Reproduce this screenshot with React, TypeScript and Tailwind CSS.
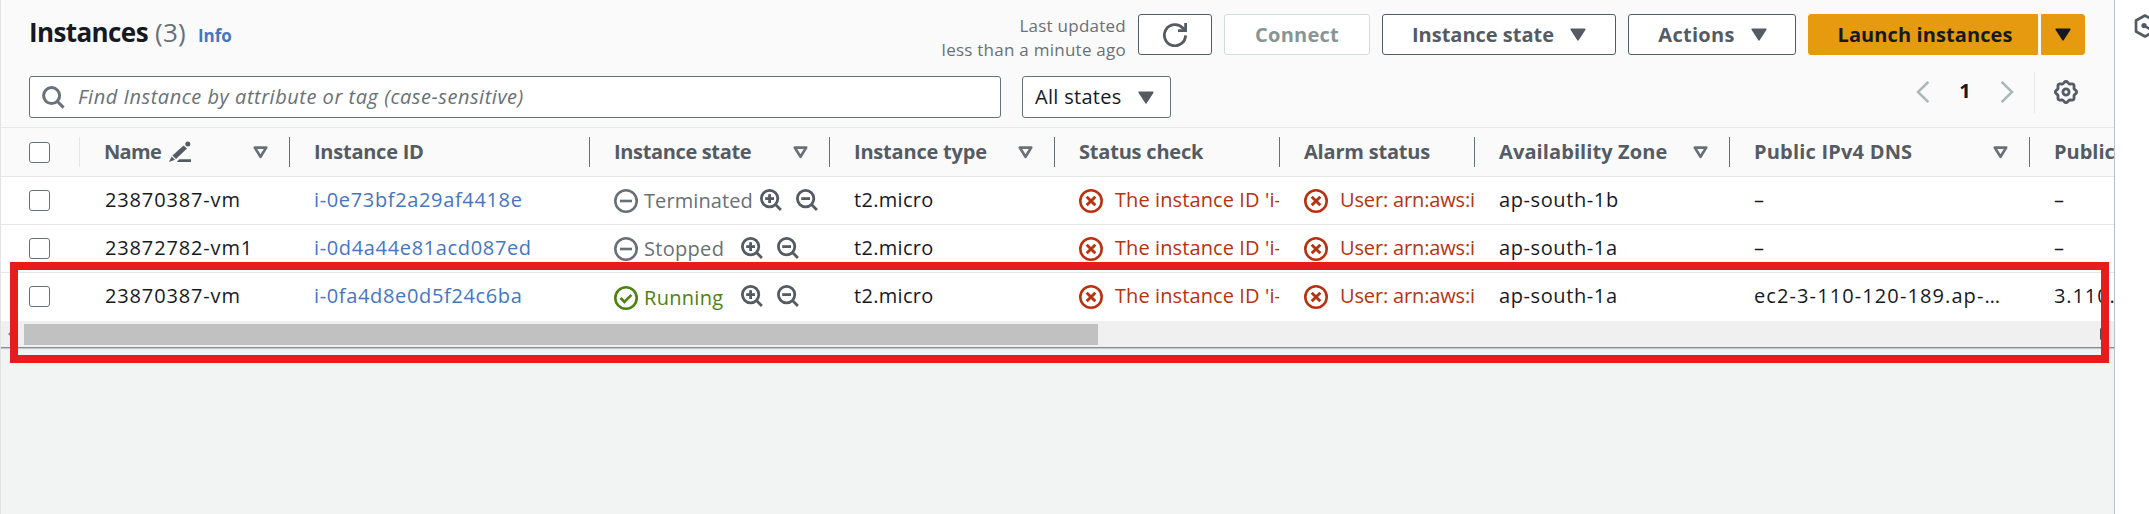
import type { ReactNode } from "react";

type State = "Terminated" | "Stopped" | "Running";

interface Instance {
  name: string;
  id: string;
  state: State;
  zone: string;
  dns: string;
  ip: string;
}

const instances: Instance[] = [
  { name: "23870387-vm", id: "i-0e73bf2a29af4418e", state: "Terminated", zone: "ap-south-1b", dns: "–", ip: "–" },
  { name: "23872782-vm1", id: "i-0d4a44e81acd087ed", state: "Stopped", zone: "ap-south-1a", dns: "–", ip: "–" },
  { name: "23870387-vm", id: "i-0fa4d8e0d5f24c6ba", state: "Running", zone: "ap-south-1a", dns: "ec2-3-110-120-189.ap-…", ip: "3.110." },
];

const columns =
  "grid grid-cols-[79px_210px_300px_240px_225px_225px_195px_255px_300px_84px]";

// Outline of the settings gear: a circle with eight rounded teeth.
const gearOutline =
  Array.from({ length: 96 }, (_, i) => {
    const angle = (i / 96) * Math.PI * 2;
    const radius = 9.7 + 0.95 * Math.cos(8 * angle);
    const x = 12 + radius * Math.sin(angle);
    const y = 12 - radius * Math.cos(angle);
    return `${i === 0 ? "M" : "L"}${x.toFixed(2)} ${y.toFixed(2)}`;
  }).join("") + "z";

function CaretDown() {
  return (
    <svg className="h-[13px] w-4 shrink-0" viewBox="0 0 16 13">
      <path d="M1.2 1.2h13.6L8 11.8z" fill="currentColor" stroke="currentColor" strokeWidth="1.6" strokeLinejoin="round" />
    </svg>
  );
}

function SortIcon() {
  return (
    <svg className="h-[13px] w-[15px] shrink-0 text-[#687078]" viewBox="0 0 15 13">
      <path d="M1.8 1.6h11.4L7.5 10.8z" fill="none" stroke="currentColor" strokeWidth="2.7" strokeLinejoin="round" />
    </svg>
  );
}

function EditIcon() {
  return (
    <svg className="h-[22px] w-[22px] shrink-0" viewBox="0 0 22 22" fill="currentColor">
      <circle cx="18.8" cy="2.9" r="2.5" />
      <path d="M14.6 4.4l3.4 3.2L7 18l-3.6-3.4zM2.6 15.6l3.4 3.2L0 21zM10.2 18.3H22V21H7.8z" />
    </svg>
  );
}

function SearchIcon() {
  return (
    <svg className="h-[23px] w-[23px] shrink-0 text-[#687078]" viewBox="0 0 23 23" fill="none" stroke="currentColor" strokeWidth="3">
      <circle cx="9.6" cy="9.6" r="8" />
      <path d="M15.2 15.2l6.4 6.4" />
    </svg>
  );
}

function ZoomIcon({ plus = false }: { plus?: boolean }) {
  return (
    <svg className="h-[22px] w-[22px] shrink-0 text-[#545b64]" viewBox="0 0 22 22" fill="none" stroke="currentColor" strokeWidth="2.8">
      <circle cx="9.6" cy="9.6" r="8.2" />
      <path d="M15.5 15.5l5.4 5.4" />
      <path d="M5.2 9.6h8.8" />
      {plus && <path d="M9.6 5.2V14" />}
    </svg>
  );
}

function RefreshIcon() {
  return (
    <svg className="h-6 w-6" viewBox="0 0 24 24" fill="none" stroke="currentColor" strokeWidth="2.8">
      <path d="M22.6 12.4A10.6 10.6 0 1 1 19.8 5l2 2.2" />
      <path d="M22.6 0v7.7H15" />
    </svg>
  );
}

function GearIcon() {
  return (
    <svg className="h-6 w-6" viewBox="0 0 24 24" fill="none" stroke="currentColor" strokeWidth="2.8" strokeLinejoin="round">
      <path d={gearOutline} />
      <circle cx="12" cy="12" r="3.1" />
    </svg>
  );
}

function HexIcon() {
  return (
    <svg className="h-6 w-[22px] shrink-0" viewBox="0 0 22 24" fill="none" stroke="#545b64" strokeWidth="2.7">
      <path d="M11 1.5l9 5v11l-9 5-9-5v-11z" strokeLinejoin="round" />
      <circle cx="10" cy="11.6" r="2.6" fill="#545b64" stroke="none" />
      <path d="M10 11.6l7 4" />
    </svg>
  );
}

function StatusIcon({ kind }: { kind: "minus" | "check" | "cross" }) {
  return (
    <svg className="h-6 w-6 shrink-0" viewBox="0 0 24 24" fill="none" stroke="currentColor" strokeWidth="2.6">
      <circle cx="12" cy="12" r="10.7" />
      {kind === "minus" && <path d="M6 12h12" />}
      {kind === "check" && <path d="M6.5 12l3.9 3.8 7-7" />}
      {kind === "cross" && <path d="M7.7 7.7l8.6 8.6M16.3 7.7l-8.6 8.6" strokeWidth="2.9" />}
    </svg>
  );
}

function Button({ className, children }: { className: string; children: ReactNode }) {
  return (
    <button className={`flex h-[41px] items-center justify-center rounded-[3px] border font-bold ${className}`}>
      {children}
    </button>
  );
}

function Checkbox() {
  return <span className="ml-7 h-[21px] w-[21px] rounded-[3px] border border-[#687078] bg-white" />;
}

function HeaderCell({ label, className, sort = false, edit = false }: { label: string; className: string; sort?: boolean; edit?: boolean }) {
  return (
    <div className="flex h-[30px] items-center overflow-hidden border-r border-[#687078] pr-[21px] pl-6 font-bold whitespace-nowrap text-[#545b64]">
      <span className={className}>{label}</span>
      {edit && <span className="ml-2"><EditIcon /></span>}
      {sort && <span className="ml-auto"><SortIcon /></span>}
    </div>
  );
}

function ErrorCell({ text, className }: { text: string; className: string }) {
  return (
    <div className="mr-px flex items-center gap-3 overflow-hidden pl-6 whitespace-nowrap text-[#b7320f]">
      <StatusIcon kind="cross" />
      <span className={`pb-[2px] ${className}`}>{text}</span>
    </div>
  );
}

function StateCell({ state }: { state: State }) {
  const running = state === "Running";
  const wide = state === "Terminated";
  return (
    <div className="flex items-center pl-6">
      <div className={`flex items-center gap-[6px] ${running ? "pt-[2px] text-[#4c8310]" : "text-[#687078]"}`}>
        <StatusIcon kind={running ? "check" : "minus"} />
        <span className={wide ? "w-[116px] tracking-[0.1px]" : "w-[97px] tracking-[0.3px]"}>{state}</span>
      </div>
      <div className="flex gap-[14px] pb-[2px]">
        <ZoomIcon plus />
        <ZoomIcon />
      </div>
    </div>
  );
}

function InstanceRow({ instance, last }: { instance: Instance; last: boolean }) {
  return (
    <div className={`${columns} h-12 items-center border-b bg-white ${last ? "border-white" : "border-[#e6e8e8]"}`}>
      <Checkbox />
      <div className="pb-[2px] pl-[25px] tracking-[0.85px]">{instance.name}</div>
      <div className="pb-[2px] pl-6 tracking-[0.65px] text-[#4676c0]">{instance.id}</div>
      <StateCell state={instance.state} />
      <div className="pb-[2px] pl-6 tracking-[0.3px]">t2.micro</div>
      <ErrorCell text="The instance ID 'i-" className="tracking-[0.1px]" />
      <ErrorCell text="User: arn:aws:i" className="tracking-[-0.15px]" />
      <div className="pb-[2px] pl-6 tracking-[0.6px]">{instance.zone}</div>
      <div className="pb-[2px] pl-6 tracking-[1.1px]">{instance.dns}</div>
      <div className="overflow-hidden pb-[2px] pl-6 tracking-[0.9px]">{instance.ip}</div>
    </div>
  );
}

export default function App() {
  return (
    <div className="relative flex h-[514px] w-full overflow-hidden bg-white font-['Open_Sans','Noto_Sans',sans-serif] text-[20px] leading-6 text-[#16191f]">
      <main className="w-[2115px] shrink-0 overflow-hidden border-r border-l border-r-[#b9c0c3] border-l-[#e0e2e3] bg-[#f2f3f3]">
        <section className="border-b border-[#878c94] bg-[#fafafa] shadow-[0_1px_1px_#c8cbce]">
          <header className="flex h-[76px] justify-between pr-[29px] pl-7">
            <div className="flex items-baseline pt-4 leading-8">
              <h1 className="text-[26px] font-bold tracking-[-0.6px]">Instances</h1>
              <span className="ml-[7px] text-[26px] tracking-[0.3px] text-[#687078]">(3)</span>
              <a className="ml-3 text-[17px] font-bold tracking-[-0.1px] text-[#4676c0]">Info</a>
            </div>
            <div className="flex items-start pt-[14px] text-[#545b64]">
              <p className="mr-3 text-right text-[17px] tracking-[0.25px] text-[#687078]">
                Last updated
                <br />
                less than a minute ago
              </p>
              <Button className="mr-3 w-[74px] border-[#545b64] bg-white"><RefreshIcon /></Button>
              <Button className="mr-3 w-[146px] border-[#d5dbdb] bg-white tracking-[0.25px] text-[#879596]">Connect</Button>
              <Button className="mr-3 w-[234px] gap-4 border-[#545b64] bg-white">Instance state<CaretDown /></Button>
              <Button className="mr-3 w-[168px] gap-4 border-[#545b64] bg-white pl-px tracking-[0.3px]">Actions<CaretDown /></Button>
              <Button className="mr-[3px] w-[230px] rounded-r-none border-[#e59a10] bg-[#e59a10] pl-1 tracking-[0.1px] text-[#16191f]">Launch instances</Button>
              <Button className="w-11 rounded-l-none border-[#e59a10] bg-[#e59a10] text-[#16191f]"><CaretDown /></Button>
            </div>
          </header>

          <div className="flex h-[51px] items-start pr-9 pl-7">
            <div className="flex h-[42px] w-[972px] items-center gap-[13px] rounded-[3px] border border-[#687078] bg-white pl-3">
              <SearchIcon />
              <span className="tracking-[0.53px] text-[#687078] italic">Find Instance by attribute or tag (case-sensitive)</span>
            </div>
            <div className="ml-[21px] flex h-[42px] w-[149px] items-center justify-between rounded-[3px] border border-[#687078] bg-white pr-4 pl-3">
              <span className="tracking-[0.3px]">All states</span>
              <span className="text-[#545b64]"><CaretDown /></span>
            </div>
            <nav className="-mt-[5px] ml-auto flex h-[42px] items-center text-[#aab7b8]">
              <svg className="h-[22px] w-[14px]" viewBox="0 0 14 22" fill="none" stroke="currentColor" strokeWidth="2.5">
                <path d="M12.4.8L2 11l10.4 10.2" />
              </svg>
              <span className="-mt-[2px] w-[70px] text-center font-bold text-[#16191f]">1</span>
              <svg className="h-[22px] w-[14px]" viewBox="0 0 14 22" fill="none" stroke="currentColor" strokeWidth="2.5">
                <path d="M1.6.8L12 11 1.6 21.2" />
              </svg>
              <span className="ml-5 h-[41px] border-l border-[#e6e8e8]" />
              <span className="ml-[19px] text-[#545b64]"><GearIcon /></span>
            </nav>
          </div>

          <div className={`${columns} h-[50px] items-center border-y border-[#e6e8e8]`}>
            <div className="flex h-[30px] items-center border-r border-[#e6e8e8]"><Checkbox /></div>
            <HeaderCell label="Name" className="tracking-[-0.7px]" sort edit />
            <HeaderCell label="Instance ID" className="tracking-[-0.25px]" />
            <HeaderCell label="Instance state" className="tracking-[-0.35px]" sort />
            <HeaderCell label="Instance type" className="tracking-[-0.2px]" sort />
            <HeaderCell label="Status check" className="tracking-[-0.2px]" />
            <HeaderCell label="Alarm status" className="tracking-[-0.2px]" />
            <HeaderCell label="Availability Zone" className="tracking-[0.1px]" sort />
            <HeaderCell label="Public IPv4 DNS" className="tracking-[0.2px]" sort />
            <div className="overflow-hidden pl-6 font-bold whitespace-nowrap text-[#545b64]">Public</div>
          </div>

          {instances.map((instance, i) => (
            <InstanceRow key={instance.id} instance={instance} last={i === instances.length - 1} />
          ))}

          <div className="flex h-[26px] items-center bg-[#f0f0f0]">
            <svg className="ml-[7px] h-[10px] w-4" viewBox="0 0 16 10">
              <path d="M0 5l5-5v10z" fill="#8b8b8b" />
            </svg>
            <div className="h-[21px] w-[1074px] bg-[#c1c1c1]" />
            <svg className="mr-[6px] ml-auto h-3 w-2" viewBox="0 0 8 12">
              <path d="M0 0l8 6-8 6z" fill="#505050" />
            </svg>
          </div>
        </section>
      </main>

      <aside className="flex shrink-0 pt-[14px] pl-[19px]">
        <HexIcon />
      </aside>

      <div className="absolute top-[262px] left-[10px] h-[101px] w-[2099px] border-8 border-[#e81c1c]" />
    </div>
  );
}
